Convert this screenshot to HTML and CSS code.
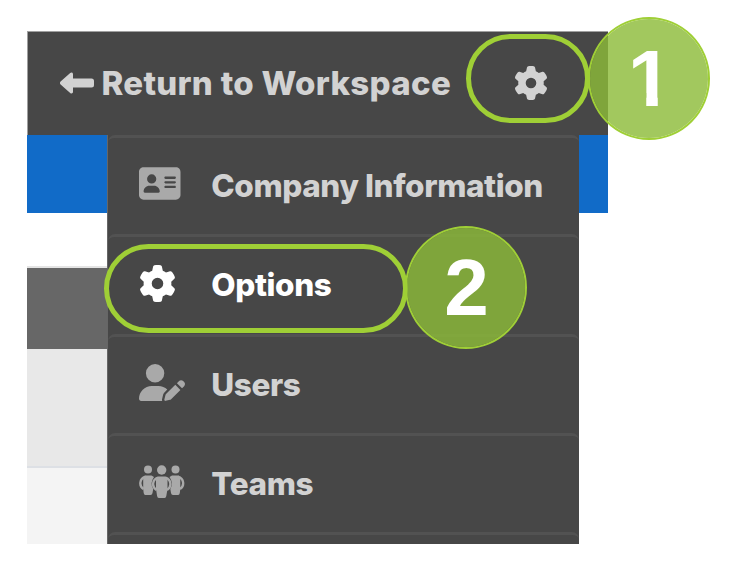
FILE: index.html
```html
<!DOCTYPE html>
<html lang="en">
<head>
<meta charset="utf-8">
<title>Workspace settings</title>
<link rel="stylesheet" href="styles.css">
</head>
<body>
<svg class="defs" aria-hidden="true">
  <symbol id="gear" viewBox="0 0 512 512"><path d="M495.9 166.6c3.2 8.7 .5 18.4-6.4 24.6l-43.3 39.4c1.1 8.3 1.7 16.8 1.7 25.4s-.6 17.1-1.7 25.4l43.3 39.4c6.9 6.2 9.6 15.9 6.4 24.6c-4.4 11.9-9.7 23.3-15.8 34.3l-4.7 8.1c-6.6 11-14 21.4-22.1 31.2c-5.9 7.2-15.7 9.6-24.5 6.8l-55.7-17.7c-13.4 10.3-28.2 18.9-44 25.4l-12.5 57.1c-2 9.1-9 16.3-18.2 17.8c-13.8 2.3-28 3.5-42.5 3.5s-28.7-1.2-42.5-3.5c-9.2-1.5-16.2-8.7-18.2-17.8l-12.5-57.1c-15.8-6.5-30.6-15.1-44-25.4L83.1 425.9c-8.8 2.8-18.6 .3-24.5-6.8c-8.1-9.8-15.5-20.2-22.1-31.2l-4.7-8.1c-6.1-11-11.4-22.4-15.8-34.3c-3.2-8.7-.5-18.4 6.4-24.6l43.3-39.4C64.6 273.1 64 264.6 64 256s.6-17.1 1.7-25.4L22.4 191.2c-6.9-6.2-9.6-15.9-6.4-24.6c4.4-11.9 9.7-23.3 15.8-34.3l4.7-8.1c6.6-11 14-21.4 22.1-31.2c5.9-7.2 15.7-9.6 24.5-6.8l55.7 17.7c13.4-10.3 28.2-18.9 44-25.4l12.5-57.1c2-9.1 9-16.3 18.2-17.8C227.3 1.2 241.5 0 256 0s28.7 1.2 42.5 3.5c9.2 1.5 16.2 8.7 18.2 17.8l12.5 57.1c15.8 6.5 30.6 15.1 44 25.4l55.7-17.7c8.8-2.8 18.6-.3 24.5 6.8c8.1 9.8 15.5 20.2 22.1 31.2l4.7 8.1c6.1 11 11.4 22.4 15.8 34.3zM256 336a80 80 0 1 0 0-160 80 80 0 1 0 0 160z"/></symbol>
</svg>
<main class="shot">
  <header class="topbar">
    <a class="return">
      <svg class="arrow" viewBox="0 0 35 22"><path d="M.6 9.600 10.200 1C11.500-.1 13 .6 13 2.200V6.600h18.500q2.500 0 2.500 2.500v3.800q0 2.500-2.500 2.500H13v4.400c0 1.600-1.500 2.300-2.800 1.200L.6 12.400q-1.300-1.400 0-2.800z"/></svg>
      <span class="return-text">Return to Workspace</span>
    </a>
    <svg class="top-gear"><use href="#gear"/></svg>
  </header>
  <section class="page">
    <div class="band blue"></div>
    <div class="band white"></div>
    <div class="band dark"></div>
    <div class="band grey"></div>
    <div class="band light"></div>
    <nav class="menu">
      <a class="item"><span class="icon"><svg class="card" viewBox="0 32 576 448"><path d="M64 32C28.700 32 0 60.700 0 96V416c0 35.300 28.700 64 64 64H512c35.300 0 64-28.700 64-64V96c0-35.300-28.700-64-64-64H64zm80 256h64c44.200 0 80 35.800 80 80c0 8.800-7.200 16-16 16H80c-8.800 0-16-7.200-16-16c0-44.200 35.800-80 80-80zm-32-96a64 64 0 1 1 128 0 64 64 0 1 1 -128 0zm256-32H496c8.800 0 16 7.200 16 16s-7.200 16-16 16H368c-8.800 0-16-7.200-16-16s7.200-16 16-16zm0 64H496c8.800 0 16 7.200 16 16s-7.200 16-16 16H368c-8.800 0-16-7.200-16-16s7.200-16 16-16zm0 64H496c8.800 0 16 7.200 16 16s-7.200 16-16 16H368c-8.800 0-16-7.200-16-16s7.200-16 16-16z"/></svg></span><span class="label">Company Information</span></a>
      <a class="item active"><span class="icon"><svg class="gear"><use href="#gear"/></svg></span><span class="label">Options</span></a>
      <a class="item"><span class="icon"><svg class="user" viewBox="0 0 640 512"><path d="M224 256A128 128 0 1 0 224 0a128 128 0 1 0 0 256zm-45.700 48C79.800 304 0 383.800 0 482.300C0 498.700 13.300 512 29.700 512H322.800c-3.100-8.800-3.700-18.400-1.400-27.800l15-60.100c2.800-11.300 8.600-21.500 16.800-29.700l40.300-40.300c-32.100-31-75.700-50.100-123.900-50.100H178.300zm435.500-68.300c-15.600-15.600-40.900-15.600-56.600 0l-29.400 29.400 71 71 29.400-29.400c15.600-15.600 15.600-40.900 0-56.600l-14.400-14.400zM375.900 417c-4.100 4.100-7 9.200-8.400 14.900l-15 60.100c-1.400 5.500 .2 11.200 4.200 15.200s9.700 5.600 15.200 4.200l60.100-15c5.600-1.400 10.800-4.300 14.900-8.400L576.100 358.700l-71-71L375.900 417z"/></svg></span><span class="label">Users</span></a>
      <a class="item"><span class="icon"><svg class="team" viewBox="0 0 46 34"><circle cx="9" cy="4.500" r="4"/><circle cx="36.500" cy="4.500" r="4"/><circle cx="22.700" cy="5" r="4.700"/><path d="M6 10.500h6.500l2.500 1.500q-4.500 6.500-.8 12L13.500 28q-.3 2-2 2H6.300q-1.300 0-1.600-2L4.200 24V13z"/><path d="M39.500 10.500H33L30.500 12q4.500 6.500.8 12l.7 4q.3 2 2 2h5.200q1.300 0 1.600-2l.5-4V13z"/><path d="M19 11.500h7.500q2 .8 2 3v9.500l-1.200 7q-.3 1.900-1.700 1.900h-5.800q-1.400 0-1.700-1.900L17 24v-9.500q0-2.200 2-3z"/><path class="arms" d="M6.500 11.700C.4 13.500-.3 21 4.500 24M39 11.700c6.100 1.800 6.800 9.300 2 12.300M19 12.700c-5.700 1.800-6.700 9-1.500 12.300M26.500 12.700c5.700 1.800 6.700 9 1.500 12.300"/></svg></span><span class="label">Teams</span></a>
      <div class="item last"></div>
    </nav>
  </section>
</main>
<div class="ring ring-one"></div>
<div class="ring ring-two"></div>
<div class="step step-one"><span class="numeral">1</span></div>
<div class="step step-two">2</div>
</body>
</html>
```

FILE: styles.css
```css
* { box-sizing: border-box; }
body {
  margin: 0;
  width: 732px;
  height: 562px;
  overflow: hidden;
  background: #fff;
  position: relative;
  padding: 31px 0 0 27px;
  font-family: Inter, "Liberation Sans", sans-serif;
  font-weight: 800;
  color: #d2d2d2;
}
svg { display: block; fill: currentColor; }
.defs { position: absolute; width: 0; height: 0; }
.shot { width: 581px; height: 513px; overflow: hidden; }
.topbar {
  height: 104px;
  background: #474747;
  border-top: 1px solid #a0a0a0;
  border-left: 1px solid #a0a0a0;
  display: flex;
  align-items: center;
  justify-content: space-between;
  padding: 0 60px 2px 31.500px;
}
.return { display: flex; align-items: center; gap: 7px; }
.arrow { width: 35px; height: 22px; }
.return-text { font-size: 33px; line-height: 40px; white-space: nowrap; letter-spacing: .300px; }
.top-gear { width: 34px; height: 34px; }
.page { position: relative; height: 409px; }
.band { width: 81px; }
.blue { width: 581px; height: 78px; background: #116bc8; }
.white { height: 55px; border-bottom: 2px solid #e4e4e4; }
.dark { height: 81px; background: #676767; }
.grey { height: 119px; background: #e8e8e8; border-bottom: 2px solid #dde0e5; }
.light { height: 76px; background: #f4f4f4; }
.menu {
  position: absolute;
  top: 0;
  left: 80px;
  width: 472px;
  height: 409px;
  overflow: hidden;
  background: #474747;
  border-left: 1px solid #666;
}
.item {
  height: 99.300px;
  border-top: 3px solid #525252;
  border-radius: 7px 7px 0 0;
  display: flex;
  align-items: center;
  padding-left: 31px;
}
.icon { width: 72.300px; color: #a9a9a9; }
.active, .active .icon { color: #fff; }
.label { font-size: 31.500px; line-height: 40px; white-space: nowrap; letter-spacing: -.400px; }
.card { width: 41.500px; height: 33px; margin-bottom: 5px; }
.gear { width: 37px; height: 37px; margin: 0 0 4px -.500px; }
.user { width: 46px; height: 37px; margin-bottom: 4px; }
.team { width: 46px; height: 34px; margin-bottom: 4px; }
.arms { fill: none; stroke: currentColor; stroke-width: 2.400; }
.ring {
  position: absolute;
  border: 5px solid #9fcf36;
  border-radius: 44.500px;
}
.ring-one { left: 466px; top: 34px; width: 124.300px; height: 89.300px; }
.ring-two { left: 104px; top: 243.500px; width: 304px; height: 89px; }
.step {
  position: absolute;
  width: 122px;
  height: 123px;
  border: 2px solid #9fcf36;
  border-radius: 50%;
  background: rgba(141, 187, 57, .81);
  background-clip: padding-box;
  color: #fff;
  font: 700 80px/119px "Liberation Sans", sans-serif;
  text-align: center;
}
.step-one { left: 588px; top: 17px; padding-left: 2px; }
.step-two { left: 405px; top: 226px; padding-left: 1px; }
/* trims the foot serif so the one is a plain stem and flag */
.numeral {
  display: inline-block;
  vertical-align: top;
  clip-path: polygon(0 0, 30px 0, 30px 100%, 18.500px 100%, 18.500px 74px, 0 74px);
}
```
